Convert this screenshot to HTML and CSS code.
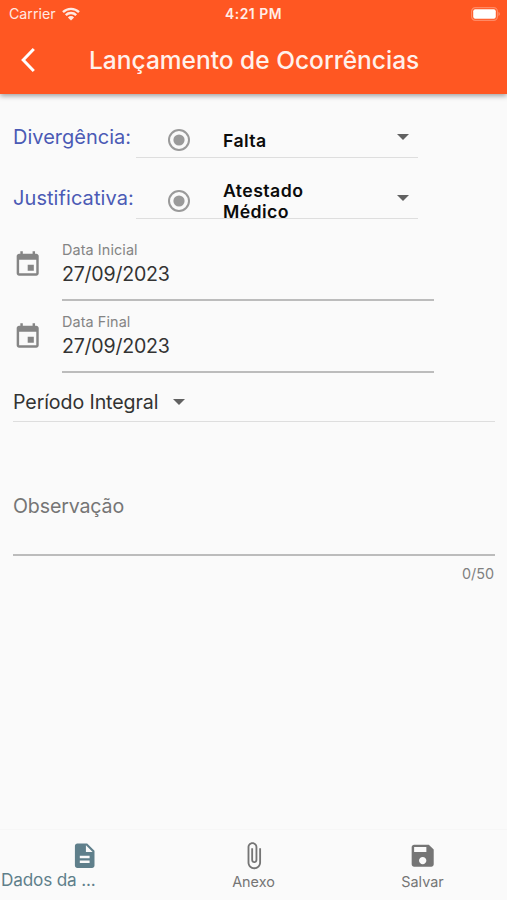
FILE: index.html
```html
<!DOCTYPE html>
<html lang="pt-BR">
<head>
<meta charset="utf-8">
<title>Lançamento de Ocorrências</title>
<link rel="stylesheet" href="styles.css">
</head>
<body>
<header class="header">
  <div class="status">
    <div class="carrier"><span>Carrier</span>
      <svg width="18" height="14" viewBox="0 0 18 14" fill="none" stroke="currentColor" stroke-width="2.4"><path d="M1 5.2a11.4 11.4 0 0 1 16 0M3.8 8.2a7.4 7.4 0 0 1 10.4 0"/><path d="M9 13.6L5.9 10.4a4.4 4.4 0 0 1 6.2 0z" fill="currentColor" stroke="none"/></svg>
    </div>
    <div class="time">4:21 PM</div>
    <svg class="battery" width="30" height="14" viewBox="0 0 30 14"><rect x=".6" y=".6" width="25.8" height="12.8" rx="3.8" fill="none" stroke="#fff" stroke-opacity=".3" stroke-width="1.2"/><rect x="2.2" y="2.2" width="22.6" height="9.6" rx="2" fill="#fff"/><path d="M27.6 4.8q2 2.2 0 4.4z" fill="#fff" fill-opacity=".5"/></svg>
  </div>
  <div class="appbar">
    <svg class="back" width="16" height="26" viewBox="0 0 16 26" fill="none" stroke="currentColor" stroke-width="3"><path d="M13.8 2L3.2 13l10.6 11"/></svg>
    <h1 class="title">Lançamento de Ocorrências</h1>
  </div>
</header>
<main class="form">
  <div class="choice">
    <span class="choice-label divergence">Divergência:</span>
    <div class="select">
      <svg class="radio" width="24" height="24" viewBox="0 0 24 24"><circle cx="12" cy="12" r="10" fill="none" stroke="#9a9a9a" stroke-width="2"/><circle cx="12" cy="12" r="5.6" fill="#9a9a9a"/></svg>
      <span class="value single">Falta</span>
      <svg class="caret" width="12" height="6" viewBox="0 0 12 6"><path d="M0 0h12L6 6z" fill="#616161"/></svg>
    </div>
  </div>
  <div class="choice">
    <span class="choice-label justification">Justificativa:</span>
    <div class="select">
      <svg class="radio" width="24" height="24" viewBox="0 0 24 24"><circle cx="12" cy="12" r="10" fill="none" stroke="#9a9a9a" stroke-width="2"/><circle cx="12" cy="12" r="5.6" fill="#9a9a9a"/></svg>
      <span class="value double">Atestado<br>Médico</span>
      <svg class="caret" width="12" height="6" viewBox="0 0 12 6"><path d="M0 0h12L6 6z" fill="#616161"/></svg>
    </div>
  </div>
  <div class="date">
    <svg class="calendar" width="29.4" height="29.4" viewBox="0 0 24 24" fill="#858585"><path d="M17 12h-5v5h5v-5zM16 1v2H8V1H6v2H5c-1.11 0-1.99.9-1.99 2L3 19c0 1.1.89 2 2 2h14c1.1 0 2-.9 2-2V5c0-1.1-.9-2-2-2h-1V1h-2zm3 18H5V8h14v11z"/></svg>
    <div class="date-field"><span class="caption">Data Inicial</span><span class="date-value">27/09/2023</span></div>
  </div>
  <div class="date">
    <svg class="calendar" width="29.4" height="29.4" viewBox="0 0 24 24" fill="#858585"><path d="M17 12h-5v5h5v-5zM16 1v2H8V1H6v2H5c-1.11 0-1.99.9-1.99 2L3 19c0 1.1.89 2 2 2h14c1.1 0 2-.9 2-2V5c0-1.1-.9-2-2-2h-1V1h-2zm3 18H5V8h14v11z"/></svg>
    <div class="date-field"><span class="caption">Data Final</span><span class="date-value">27/09/2023</span></div>
  </div>
  <div class="period"><span class="period-text">Período Integral</span>
    <svg width="12" height="6" viewBox="0 0 12 6"><path d="M0 0h12L6 6z" fill="#616161"/></svg>
  </div>
  <div class="note"><span class="note-text">Observação</span></div>
  <div class="counter">0/50</div>
</main>
<nav class="tabs">
  <div class="tab active">
    <svg width="29.4" height="29.4" viewBox="0 0 24 24" fill="currentColor"><path d="M14 2H6c-1.1 0-1.99.9-1.99 2L4 20c0 1.1.89 2 1.99 2H18c1.1 0 2-.9 2-2V8l-6-6zm2 16H8v-2h8v2zm0-4H8v-2h8v2zm-3-5V3.5L18.5 9H13z"/></svg>
    <span class="tab-label">Dados da ...</span>
  </div>
  <div class="tab">
    <svg width="29.4" height="29.4" viewBox="0 0 24 24" fill="currentColor"><path d="M16.5 6v11.5c0 2.21-1.79 4-4 4s-4-1.79-4-4V5c0-1.38 1.12-2.5 2.5-2.5s2.5 1.12 2.5 2.5v10.5c0 .55-.45 1-1 1s-1-.45-1-1V6H10v9.5c0 1.38 1.12 2.5 2.5 2.5s2.5-1.12 2.5-2.5V5c0-2.21-1.79-4-4-4S7 2.79 7 5v12.5c0 3.04 2.46 5.5 5.5 5.5s5.5-2.46 5.5-5.5V6h-1.5z"/></svg>
    <span class="tab-label">Anexo</span>
  </div>
  <div class="tab">
    <svg width="29.4" height="29.4" viewBox="0 0 24 24" fill="currentColor"><path d="M17 3H5c-1.11 0-2 .9-2 2v14c0 1.1.89 2 2 2h14c1.1 0 2-.9 2-2V7l-4-4zm-5 16c-1.66 0-3-1.34-3-3s1.34-3 3-3 3 1.34 3 3-1.34 3-3 3zm3-10H5V5h10v4z"/></svg>
    <span class="tab-label">Salvar</span>
  </div>
</nav>
</body>
</html>
```
FILE: styles.css
```css
* { box-sizing: border-box; }
body {
  margin: 0;
  width: 507px;
  height: 900px;
  overflow: hidden;
  display: flex;
  flex-direction: column;
  background: #fafafa;
  color: #333;
  font-family: Inter, "Liberation Sans", sans-serif;
  white-space: nowrap;
}
svg { display: block; flex: none; }
.header {
  height: 94px;
  flex: none;
  background: #ff5722;
  color: #fff;
  box-shadow: 0 2px 5px rgba(0, 0, 0, .36);
}
.status {
  height: 27px;
  display: grid;
  grid-template-columns: 1fr auto 1fr;
  align-items: center;
  padding: 0 6px 0 9px;
  font-size: 14px;
  line-height: 27px;
}
.carrier { display: flex; align-items: center; gap: 6px; color: #ffe9e2; font-size: 14.2px; line-height: 26px; }
.time { margin-right: 3px; font-size: 13.9px; font-weight: 600; letter-spacing: .5px; color: #ffeee9; line-height: 26px; }
.battery { justify-self: end; }
.appbar { height: 66px; display: flex; align-items: center; padding-left: 20px; }
.title {
  margin: 0 0 0 53px;
  font-size: 24.5px;
  font-weight: 500;
  line-height: 30px;
  color: #fff1ec;
}
.form { flex: 1; padding: 3px 12px 0 13px; }
.choice { height: 61px; display: flex; }
.choice-label {
  width: 123px;
  padding-top: 28px;
  font-size: 20px;
  line-height: 24px;
  color: #4b5ab5;
}
.justification { letter-spacing: .07px; }
.select {
  width: 282px;
  height: 61px;
  border-bottom: 1px solid #dedede;
  display: flex;
}
.radio { margin: 31px 0 0 31px; }
.value {
  width: 174px;
  margin-left: 32px;
  font-size: 17.7px;
  font-weight: 600;
  line-height: 21px;
  letter-spacing: .42px;
  color: #0b0b0b;
}
.single { padding-top: 33px; }
.double { padding-top: 22px; }
.caret { margin-top: 37px; }
.date { height: 72px; display: flex; }
.date:nth-of-type(3) { height: 82px; padding-top: 10px; }
.calendar { margin: 21px 19.6px 0 0; }
.date-field {
  width: 372px;
  height: 72px;
  display: flex;
  flex-direction: column;
  border-bottom: 2px solid #bcbcbc;
}
.caption { padding-top: 12px; font-size: 14.4px; line-height: 18px; letter-spacing: .1px; color: #848484; }
.date-value { padding-top: 3px; font-size: 19.6px; line-height: 24px; letter-spacing: -.24px; }
.period {
  height: 49px;
  display: flex;
  align-items: center;
  gap: 15px;
  padding-top: 9px;
  border-bottom: 1px solid #dedede;
}
.period-text { font-size: 19.6px; line-height: 24px; letter-spacing: -.1px; }
.note { height: 134px; padding-top: 72px; border-bottom: 2px solid #bcbcbc; }
.note-text { font-size: 19.6px; line-height: 24px; letter-spacing: -.14px; color: #757575; }
.counter { padding: 9px 1px 0 0; text-align: right; font-size: 14.4px; line-height: 18px; color: #808080; }
.tabs {
  height: 71px;
  flex: none;
  display: grid;
  grid-template-columns: repeat(3, 1fr);
  border-top: 1px solid #f6f6f6;
}
.tab {
  display: flex;
  flex-direction: column;
  align-items: center;
  padding-top: 11px;
  color: #757575;
}
.tab-label { margin-top: 2.6px; font-size: 14.4px; line-height: 18px; }
.active { color: #5f7f8b; }
.active .tab-label { align-self: flex-start; margin-left: 1px; margin-top: 0; font-size: 17.2px; line-height: 20px; letter-spacing: -.18px; }
```
